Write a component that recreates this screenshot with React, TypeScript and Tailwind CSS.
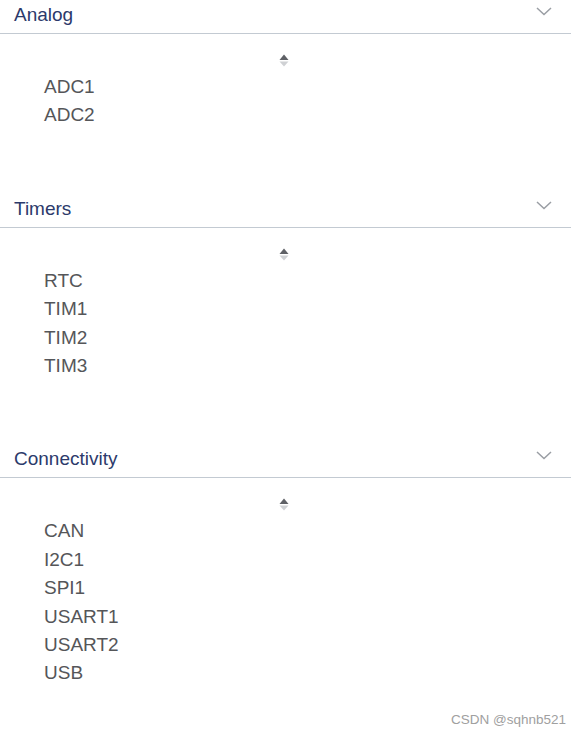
import * as React from "react"

const sections = [
  { title: "Analog", items: ["ADC1", "ADC2"] },
  { title: "Timers", items: ["RTC", "TIM1", "TIM2", "TIM3"] },
  { title: "Connectivity", items: ["CAN", "I2C1", "SPI1", "USART1", "USART2", "USB"] },
]

function Chevron() {
  return (
    <svg width="16" height="9" viewBox="0 0 16 9" fill="none" aria-hidden="true">
      <path d="M1 1l7 6.5L15 1" stroke="#9a9ea4" strokeWidth="1.5" />
    </svg>
  )
}

function SortIcon() {
  return (
    <svg width="10" height="13" viewBox="0 0 10 13" aria-hidden="true">
      <path d="M5 0.5L9.5 6H0.5z" fill="#5f6166" />
      <path d="M0.5 7.5H9.5L5 12.5z" fill="#cfd1d4" />
    </svg>
  )
}

export default function App() {
  return (
    <div
      className="relative h-[738px] w-[581px] overflow-hidden bg-white"
      style={{ fontFamily: '"Liberation Sans", Arial, sans-serif' }}
    >
      <div className="w-[571px]">
        {sections.map((section) => (
          <section key={section.title} className="pb-[64px]">
            <div className="flex h-[34px] items-start justify-between border-b border-[#c3cad2]">
              <span className="pl-[14px] text-[19px] leading-[30px] text-[#2c3a6b]">
                {section.title}
              </span>
              <span className="mr-[19px] mt-[7px]">
                <Chevron />
              </span>
            </div>
            <div className="flex justify-center pr-[4px] pt-[20px]">
              <SortIcon />
            </div>
            <ul className="mt-[6px] pl-[44px]">
              {section.items.map((item) => (
                <li key={item} className="text-[19px] leading-[28.4px] text-[#555659]">
                  {item}
                </li>
              ))}
            </ul>
          </section>
        ))}
      </div>
      <div className="absolute bottom-[10px] right-[15px] text-[13.5px] leading-[16px] text-[#a0a0a0]">
        CSDN @sqhnb521
      </div>
    </div>
  )
}
